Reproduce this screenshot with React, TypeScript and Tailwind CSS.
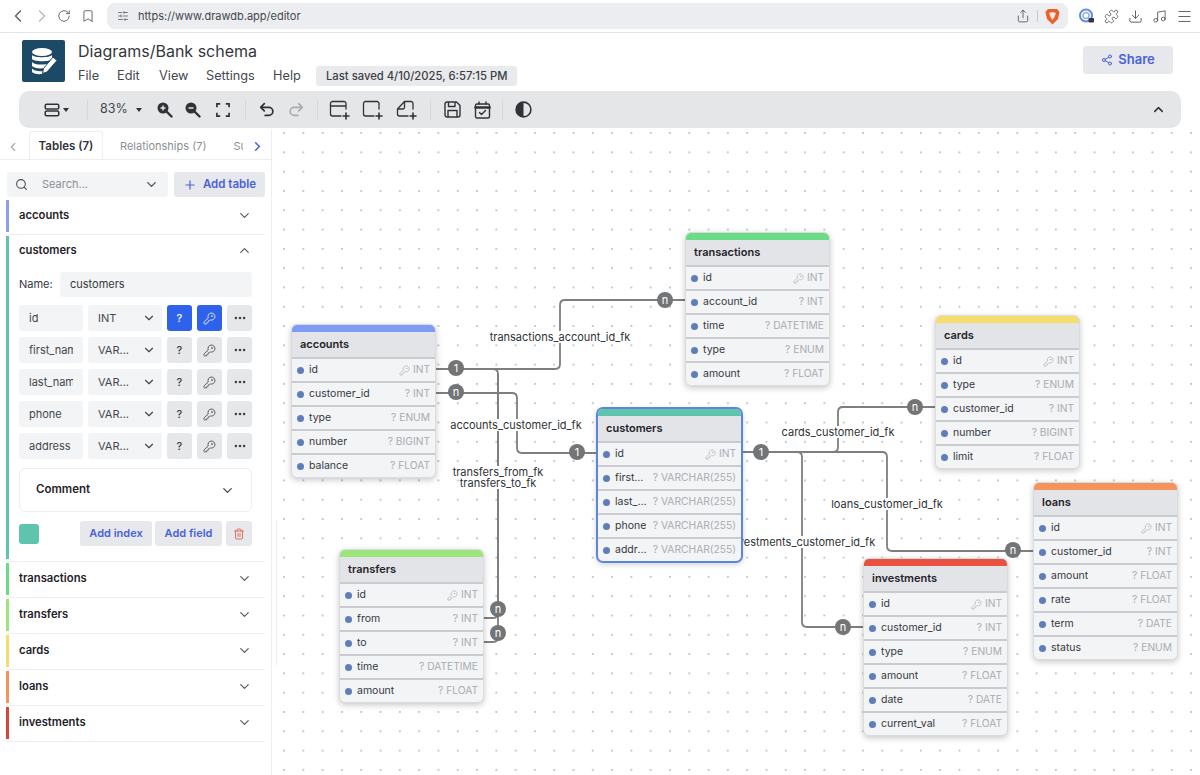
import { Bookmark, ChevronDown, ChevronLeft, ChevronRight, ChevronUp, Download, KeyRound, Menu, MoreHorizontal, Music, Plus, Puzzle, RotateCw, Search, Share, Share2, SlidersHorizontal, Trash2 } from 'lucide-react';

type Row = { name: string; type: string; pk?: boolean };
type TableData = { name: string; color: string; left: number; top: number; selected?: boolean; rows: Row[] };

// page coords minus the canvas origin (272, 130)
const tables: TableData[] = [
  { name: 'accounts', color: '#7f9cf5', left: 19, top: 194, rows: [
    { name: 'id', type: 'INT', pk: true }, { name: 'customer_id', type: '? INT' }, { name: 'type', type: '? ENUM' }, { name: 'number', type: '? BIGINT' }, { name: 'balance', type: '? FLOAT' },
  ] },
  { name: 'customers', color: '#5ec4ae', left: 325, top: 278, selected: true, rows: [
    { name: 'id', type: 'INT', pk: true }, { name: 'first_name', type: '? VARCHAR(255)' }, { name: 'last_name', type: '? VARCHAR(255)' }, { name: 'phone', type: '? VARCHAR(255)' }, { name: 'address', type: '? VARCHAR(255)' },
  ] },
  { name: 'transactions', color: '#6bdc85', left: 413, top: 102, rows: [
    { name: 'id', type: 'INT', pk: true }, { name: 'account_id', type: '? INT' }, { name: 'time', type: '? DATETIME' }, { name: 'type', type: '? ENUM' }, { name: 'amount', type: '? FLOAT' },
  ] },
  { name: 'cards', color: '#f5dc6c', left: 663, top: 185, rows: [
    { name: 'id', type: 'INT', pk: true }, { name: 'type', type: '? ENUM' }, { name: 'customer_id', type: '? INT' }, { name: 'number', type: '? BIGINT' }, { name: 'limit', type: '? FLOAT' },
  ] },
  { name: 'transfers', color: '#9be57a', left: 67, top: 419, rows: [
    { name: 'id', type: 'INT', pk: true }, { name: 'from', type: '? INT' }, { name: 'to', type: '? INT' }, { name: 'time', type: '? DATETIME' }, { name: 'amount', type: '? FLOAT' },
  ] },
  { name: 'investments', color: '#e8503f', left: 591, top: 428, rows: [
    { name: 'id', type: 'INT', pk: true }, { name: 'customer_id', type: '? INT' }, { name: 'type', type: '? ENUM' }, { name: 'amount', type: '? FLOAT' }, { name: 'date', type: '? DATE' }, { name: 'current_val', type: '? FLOAT' },
  ] },
  { name: 'loans', color: '#f4935a', left: 761, top: 352, rows: [
    { name: 'id', type: 'INT', pk: true }, { name: 'customer_id', type: '? INT' }, { name: 'amount', type: '? FLOAT' }, { name: 'rate', type: '? FLOAT' }, { name: 'term', type: '? DATE' }, { name: 'status', type: '? ENUM' },
  ] },
];

const lines = [
  'M164 239 H283 q5 0 5 -5 V175 q0 -5 5 -5 H413',
  'M164 263 H240 q5 0 5 5 V318 q0 5 5 5 H325',
  'M212 488 H221 q5 0 5 -5 V244 q0 -5 -5 -5 H164',
  'M212 512 H221 q5 0 5 -5 V244',
  'M470 322 H561 q5 0 5 -5 V282 q0 -5 5 -5 H663',
  'M470 322 H610 q5 0 5 5 V416 q0 5 5 5 H761',
  'M470 322 H525 q5 0 5 5 V492 q0 5 5 5 H591',
];

const badges = [
  { x: 184, y: 238, t: '1' }, { x: 184, y: 262, t: 'n' }, { x: 393, y: 170, t: 'n' }, { x: 305, y: 322, t: '1' },
  { x: 489, y: 322, t: '1' }, { x: 643, y: 277, t: 'n' }, { x: 741, y: 420, t: 'n' }, { x: 571, y: 497, t: 'n' },
  { x: 226, y: 479, t: 'n' }, { x: 226, y: 503, t: 'n' },
];

const labels = [
  { x: 288, y: 207, t: 'transactions_account_id_fk' },
  { x: 244, y: 295, t: 'accounts_customer_id_fk' },
  { x: 226, y: 342, t: 'transfers_from_fk' },
  { x: 226, y: 353, t: 'transfers_to_fk' },
  { x: 566, y: 302, t: 'cards_customer_id_fk' },
  { x: 615, y: 374, t: 'loans_customer_id_fk' },
  { x: 530, y: 412, t: 'investments_customer_id_fk' },
];

const fields = [
  { name: 'id', type: 'INT', on: true },
  { name: 'first_name', type: 'VAR...' },
  { name: 'last_name', type: 'VAR...' },
  { name: 'phone', type: 'VAR...' },
  { name: 'address', type: 'VAR...' },
];

function DbTable({ t }: { t: TableData }) {
  return (
    <div
      className={`absolute w-[145px] rounded-md bg-[#f3f4f6] shadow-[0_2px_6px_rgba(0,0,0,0.22)] overflow-hidden border ${t.selected ? 'border-[#5b86dc] ring-1 ring-[#5b86dc]' : 'border-[#d9dbdf]'}`}
      style={{ left: t.left, top: t.top }}
    >
      <div className="h-[7px]" style={{ background: t.color }} />
      <div className="h-[27px] bg-[#e3e4e7] border-b-2 border-[#c9cbcf] flex items-center pl-[8px] text-[11px] font-semibold text-[#1f2329]">{t.name}</div>
      {t.rows.map((r, i) => (
        <div key={r.name} className={`flex items-center pl-[5px] pr-[5px] text-[10.5px] ${i < t.rows.length - 1 ? 'h-[24px] border-b-2 border-[#c9cbcf]' : 'h-[22px]'}`}>
          <span className="w-[7px] h-[7px] rounded-full bg-[#5f7db9] shrink-0" />
          <span className="ml-[5px] text-[#33383f] truncate min-w-0">{r.name}</span>
          <span className="ml-auto pl-[5px] flex items-center gap-[3px] text-[10.25px] text-[#a9acb1] whitespace-nowrap shrink-0">
            {r.pk && <KeyRound size={11} strokeWidth={1.4} />}
            {r.type}
          </span>
        </div>
      ))}
    </div>
  );
}

function Collapsed({ name, color }: { name: string; color: string }) {
  return (
    <div className="border-b border-[#eceef0] pb-[2px] mb-[1px]">
      <div className="h-[32px] pb-[2px] border-l-[3px] pl-[10px] pr-[13px] flex items-center justify-between" style={{ borderColor: color }}>
        <span className="text-[11.25px] font-semibold text-[#1f2329]">{name}</span>
        <ChevronDown size={15} className="text-[#5b6067]" />
      </div>
    </div>
  );
}

function Divider() {
  return <div className="w-px h-[20px] bg-[#d6d8db]" />;
}

function BarIcon({ children, w = 18 }: { children: React.ReactNode; w?: number }) {
  return (
    <svg width={w} height={w} viewBox="0 0 20 20" fill="none" stroke="#2f3338" strokeWidth="1.7" strokeLinecap="round" strokeLinejoin="round">
      {children}
    </svg>
  );
}

export default function App() {
  return (
    <div className="h-[775px] w-[1200px] overflow-hidden bg-white flex flex-col font-['Inter','Liberation_Sans',sans-serif]">
      {/* browser chrome */}
      <div className="h-[33px] shrink-0 border-b border-[#e3e4e6] flex items-center pl-[8px] text-[#55585d]">
        <ChevronLeft size={20} strokeWidth={1.5} />
        <ChevronRight size={20} strokeWidth={1.5} className="ml-[4px] text-[#b5b7ba]" />
        <RotateCw size={14} strokeWidth={1.5} className="ml-[5px]" />
        <Bookmark size={14} strokeWidth={1.5} className="ml-[10px]" />
        <div className="ml-[12px] w-[961px] h-[26px] rounded-[8px] bg-[#ecedf0] flex items-center pl-[10px] pr-[8px]">
          <SlidersHorizontal size={12} strokeWidth={1.5} />
          <span className="ml-[9px] text-[11px] text-[#44474c]">https://www.drawdb.app/editor</span>
          <Share size={14} strokeWidth={1.5} className="ml-auto" />
          <div className="w-px h-[12px] bg-[#c8cacd] mx-[7px]" />
          <svg width="15" height="17" viewBox="0 0 15 17">
            <path d="M3 1 H12 L14.5 4 L13 11 L7.5 16.5 L2 11 L0.5 4 Z" fill="#e8602c" />
            <path d="M4 5 L7.5 4 L11 5 L9.5 9 L7.5 12 L5.5 9 Z" fill="#fff" opacity="0.85" />
          </svg>
        </div>
        <svg className="ml-[11px]" width="16" height="16" viewBox="0 0 16 16" fill="none">
          <circle cx="7" cy="7.5" r="6" stroke="#5f8fd6" strokeWidth="2" />
          <circle cx="7" cy="7.5" r="3" stroke="#8fb0e0" strokeWidth="1.5" />
          <rect x="9.5" y="10" width="5.5" height="4.5" rx="1" fill="#33363a" />
        </svg>
        <Puzzle size={15} strokeWidth={1.4} className="ml-[9px]" />
        <Download size={15} strokeWidth={1.5} className="ml-[9px]" />
        <Music size={15} strokeWidth={1.4} className="ml-[9px]" />
        <Menu size={17} strokeWidth={1.3} className="ml-[9px]" />
      </div>

      {/* header */}
      <div className="h-[58px] shrink-0 flex items-start pl-[22px] pr-[27px]">
        <div className="mt-[7px] w-[43px] h-[42px] rounded-[2px] bg-[#1c4a66] flex items-center justify-center">
          <svg width="30" height="30" viewBox="0 0 30 30" fill="#fff">
            <ellipse cx="13" cy="6" rx="10" ry="4" />
            <path d="M3 9 C5 12 21 12 23 9 V13 C21 16 5 16 3 13 Z" />
            <path d="M3 16 C5 19 16 19.5 20 17 L16 22 C10 23 5 22 3 20 Z" />
            <path d="M3 22.5 C5 25 10 25.5 14 25 L13 28 C8 28.5 4 27.5 3 26 Z" />
            <path d="M24 11 L28 14.5 L18 26 L13.5 27.5 L14.5 22.5 Z" stroke="#1c4a66" strokeWidth="1" />
          </svg>
        </div>
        <div className="ml-[13px] mt-[6px]">
          <div className="text-[16px] leading-[24px] text-[#33373c]">Diagrams/Bank schema</div>
          <div className="mt-[3px] flex items-center text-[12.75px] text-[#44484e]">
            <span className="w-[39px]">File</span>
            <span className="w-[42px]">Edit</span>
            <span className="w-[47px]">View</span>
            <span className="w-[67px]">Settings</span>
            <span className="w-[43px]">Help</span>
            <span className="h-[20px] px-[10px] rounded-[3px] bg-[#e9eaec] flex items-center text-[11.25px] font-medium text-[#3c4046] whitespace-nowrap">Last saved 4/10/2025, 6:57:15 PM</span>
          </div>
        </div>
        <button className="ml-auto mt-[13px] w-[90px] h-[28px] rounded-[4px] bg-[#e6e8ec] flex items-center justify-center gap-[5px] text-[13px] font-semibold text-[#4a62d8]">
          <Share2 size={12} strokeWidth={2} />
          Share
        </button>
      </div>

      {/* toolbar */}
      <div className="mx-[19px] h-[37px] shrink-0 rounded-[10px] bg-[#e5e6e8] flex items-center text-[#2f3338]">
        <div className="ml-[24px] flex items-center gap-[2px] w-[44px]">
          <BarIcon>
            <rect x="2.5" y="3.5" width="15" height="5.5" rx="1.5" />
            <rect x="2.5" y="11" width="15" height="5.5" rx="1.5" />
          </BarIcon>
          <span className="w-0 h-0 border-x-[3.5px] border-x-transparent border-t-[4px] border-t-[#2f3338]" />
        </div>
        <Divider />
        <span className="ml-[12px] text-[12.5px] text-[#44484e]">83%</span>
        <span className="ml-[8px] w-0 h-0 border-x-[3.5px] border-x-transparent border-t-[4px] border-t-[#2f3338]" />
        <svg className="ml-[14px]" width="17" height="17" viewBox="0 0 17 17" fill="none">
          <circle cx="7" cy="7" r="5.5" fill="#2f3338" />
          <path d="M11 11 L15.5 15.5" stroke="#2f3338" strokeWidth="2.4" strokeLinecap="round" />
          <path d="M7 4.5 V9.5 M4.5 7 H9.5" stroke="#e5e6e8" strokeWidth="1.5" />
        </svg>
        <svg className="ml-[11px]" width="17" height="17" viewBox="0 0 17 17" fill="none">
          <circle cx="7" cy="7" r="5.5" fill="#2f3338" />
          <path d="M11 11 L15.5 15.5" stroke="#2f3338" strokeWidth="2.4" strokeLinecap="round" />
          <path d="M4.5 7 H9.5" stroke="#e5e6e8" strokeWidth="1.5" />
        </svg>
        <svg className="ml-[15px] mr-[15px]" width="14" height="14" viewBox="0 0 15 15" fill="none" stroke="#2f3338" strokeWidth="1.8">
          <path d="M1 4.5 V1 H4.5 M10.5 1 H14 V4.5 M14 10.5 V14 H10.5 M4.5 14 H1 V10.5" />
        </svg>
        <Divider />
        <span className="ml-[12px]">
          <BarIcon>
            <path d="M7 3 L3 7 L7 11 M3 7 H12 a4.5 4.5 0 0 1 0 9 H8" strokeWidth="1.9" />
          </BarIcon>
        </span>
        <span className="ml-[11px] mr-[12px]">
          <BarIcon>
            <path d="M13 3 L17 7 L13 11 M17 7 H8 a4.5 4.5 0 0 0 0 9 H12" stroke="#a9abae" strokeWidth="1.9" />
          </BarIcon>
        </span>
        <Divider />
        <svg className="ml-[11px]" width="22" height="20" viewBox="0 0 22 20" fill="none" stroke="#2f3338" strokeWidth="1.3" strokeLinecap="round">
          <path d="M17 9 V3.5 A2 2 0 0 0 15 1.5 H3.5 A2 2 0 0 0 1.5 3.5 V14 A2 2 0 0 0 3.5 16 H12 M1.5 6 H17" />
          <path d="M17 13 V19 M14 16 H20" strokeWidth="1.6" />
        </svg>
        <svg className="ml-[11px]" width="22" height="20" viewBox="0 0 22 20" fill="none" stroke="#2f3338" strokeWidth="1.3" strokeLinecap="round">
          <path d="M17 9 V3.5 A2 2 0 0 0 15 1.5 H3.5 A2 2 0 0 0 1.5 3.5 V14 A2 2 0 0 0 3.5 16 H12" />
          <path d="M17 13 V19 M14 16 H20" strokeWidth="1.6" />
        </svg>
        <svg className="ml-[12px]" width="22" height="20" viewBox="0 0 22 20" fill="none" stroke="#2f3338" strokeWidth="1.3" strokeLinecap="round" strokeLinejoin="round">
          <path d="M17 9 V3.5 A2 2 0 0 0 15 1.5 H8.5 L1.5 9 V14 A2 2 0 0 0 3.5 16 H12 M1.5 9 H7 A1.5 1.5 0 0 0 8.5 7.5 V1.5" />
          <path d="M17 13 V19 M14 16 H20" strokeWidth="1.6" />
        </svg>
        <span className="ml-[12px] mr-[13px]"><Divider /></span>
        <svg width="17" height="17" viewBox="0 0 17 17" fill="none" stroke="#2f3338" strokeWidth="1.4" strokeLinejoin="round">
          <path d="M1 3 A2 2 0 0 1 3 1 H12.5 L16 4.5 V14 A2 2 0 0 1 14 16 H3 A2 2 0 0 1 1 14 Z" />
          <path d="M4.5 1 V5.5 H11 V1 M4 16 V9.5 H13 V16" />
        </svg>
        <svg className="ml-[13px]" width="17" height="18" viewBox="0 0 17 18" fill="none" stroke="#2f3338" strokeWidth="1.4" strokeLinecap="round" strokeLinejoin="round">
          <rect x="1.5" y="3" width="14" height="14" rx="1.5" />
          <path d="M1.5 6.5 H15.5" strokeWidth="2.6" />
          <path d="M5 1 V3 M12 1 V3" />
          <path d="M5.5 11.5 L7.5 13.5 L11.5 9.5" />
        </svg>
        <span className="ml-[11px] mr-[12px]"><Divider /></span>
        <svg width="17" height="17" viewBox="0 0 17 17">
          <circle cx="8.5" cy="8.5" r="7.4" fill="none" stroke="#2f3338" strokeWidth="1.6" />
          <path d="M8.5 1 A7.5 7.5 0 0 0 8.5 16 Z" fill="#2f3338" />
        </svg>
        <ChevronUp size={15} strokeWidth={2.4} className="ml-auto mr-[15px]" />
      </div>

      {/* main */}
      <div className="flex-1 min-h-0 flex mt-[2px]">
        <aside className="w-[272px] shrink-0 border-r border-[#eceef0] pt-[2px] pl-[6px] pr-[6px]">
          {/* tabs */}
          <div className="h-[28px] -mr-[6px] -ml-[6px] border-b border-[#eceef0] flex items-end relative text-[11.5px]">
            <ChevronLeft size={14} className="absolute left-[6px] top-[8px] text-[#a9acb1]" />
            <div className="ml-[29px] w-[74px] h-[28px] pt-[2px] border border-b-0 border-[#eceef0] rounded-t-[3px] bg-white flex items-center justify-center font-semibold text-[#2f3338]">Tables (7)</div>
            <div className="ml-[17px] h-[28px] pt-[2px] flex items-center text-[11px] text-[#8b8f95] whitespace-nowrap">Relationships (7)</div>
            <div className="ml-[27px] w-[10px] h-[28px] pt-[2px] flex items-center text-[11px] text-[#8b8f95] overflow-hidden">Subject</div>
            <ChevronRight size={15} strokeWidth={2.4} className="absolute left-[250px] top-[7px] text-[#3f63dc]" />
          </div>
          {/* search */}
          <div className="mt-[12px] flex gap-[6px] mb-[3px] ml-[1px]">
            <div className="w-[161px] h-[25px] rounded-[3px] bg-[#f3f4f5] flex items-center pl-[8px] pr-[9px] text-[11px] text-[#8b8f95]">
              <Search size={13} strokeWidth={2} className="text-[#4a4e54]" />
              <span className="ml-[14px]">Search...</span>
              <ChevronDown size={15} className="ml-auto text-[#4a4e54]" />
            </div>
            <button className="w-[91px] h-[25px] rounded-[3px] bg-[#e6e8ec] flex items-center justify-center gap-[6px] text-[11.5px] font-semibold text-[#4a62d8]">
              <Plus size={14} strokeWidth={2} />
              Add table
            </button>
          </div>
          <Collapsed name="accounts" color="#8b9ef0" />
          {/* open table */}
          <div className="border-b border-[#eceef0] pb-[2px] mb-[1px]">
            <div className="border-l-[3px] border-[#5ec4ae] pl-[10px] pr-[13px] h-[323px]">
              <div className="h-[29px] flex items-center justify-between">
                <span className="text-[11.25px] font-semibold text-[#1f2329]">customers</span>
                <ChevronUp size={15} className="text-[#5b6067]" />
              </div>
              <div className="mt-[7px] flex items-center text-[11px] text-[#33383f]">
                <span className="w-[41px]">Name:</span>
                <div className="w-[192px] h-[25px] rounded-[3px] bg-[#f3f4f5] flex items-center pl-[10px]">customers</div>
              </div>
              <div className="mt-[8px] flex flex-col gap-[6px]">
                {fields.map((f) => (
                  <div key={f.name} className="flex h-[26px] text-[11px] text-[#44484e]">
                    <div className="w-[64px] rounded-[3px] bg-[#f3f4f5] flex items-center pl-[10px]">
                      <span className="w-[44px] overflow-hidden whitespace-nowrap">{f.name}</span>
                    </div>
                    <div className="ml-[5px] w-[74px] rounded-[3px] bg-[#f3f4f5] flex items-center pl-[10px] pr-[6px]">
                      {f.type}
                      <ChevronDown size={14} className="ml-auto" />
                    </div>
                    <div className={`ml-[5px] w-[25px] rounded-[3px] flex items-center justify-center font-medium ${f.on ? 'bg-[#2f62ea] text-white' : 'bg-[#e6e7e9] text-[#3c4046]'}`}>?</div>
                    <div className={`ml-[5px] w-[25px] rounded-[3px] flex items-center justify-center ${f.on ? 'bg-[#2f62ea] text-white' : 'bg-[#e6e7e9] text-[#3c4046]'}`}>
                      <KeyRound size={13} strokeWidth={1.5} />
                    </div>
                    <div className="ml-[5px] w-[25px] rounded-[3px] bg-[#e6e7e9] flex items-center justify-center text-[#3c4046]">
                      <MoreHorizontal size={14} strokeWidth={2.4} />
                    </div>
                  </div>
                ))}
              </div>
              <div className="mt-[9px] w-[233px] h-[44px] rounded-[6px] border border-[#eceef0] flex items-center justify-between pl-[16px] pr-[16px] text-[11.5px] font-semibold text-[#1f2329]">
                Comment
                <ChevronDown size={15} className="text-[#44484e]" />
              </div>
              <div className="mt-[9px] flex items-center w-[233px] text-[11px] font-semibold text-[#4a62d8]">
                <div className="w-[20px] h-[20px] rounded-[3px] bg-[#5ec4ae]" />
                <button className="ml-auto w-[72px] h-[25px] rounded-[3px] bg-[#e6e8ec]">Add index</button>
                <button className="ml-[3px] w-[67px] h-[25px] rounded-[3px] bg-[#e6e8ec]">Add field</button>
                <button className="ml-[4px] w-[26px] h-[25px] rounded-[3px] bg-[#e6e8ec] flex items-center justify-center text-[#e5604f]">
                  <Trash2 size={12} strokeWidth={1.8} />
                </button>
              </div>
            </div>
          </div>
          <Collapsed name="transactions" color="#6bdc85" />
          <Collapsed name="transfers" color="#9be57a" />
          <Collapsed name="cards" color="#f5dc6c" />
          <Collapsed name="loans" color="#f4935a" />
          <Collapsed name="investments" color="#d9453a" />
        </aside>

        {/* canvas */}
        <div className="relative flex-1 min-w-0 overflow-hidden bg-white bg-[radial-gradient(circle,#b0b3b8_0.6px,transparent_0.9px)] bg-[size:19.3px_19.3px] bg-[position:2.4px_-6.6px]">
          <div className="absolute left-[4px] top-[390px] w-px h-[145px] bg-[#eceef0]" />
          <svg className="absolute left-0 top-0" width="928" height="642" fill="none">
            {lines.map((d) => (
              <path key={d} d={d} stroke="#7d7e80" strokeWidth="1.8" />
            ))}
          </svg>
          {labels.map((l) => (
            <div
              key={l.t}
              className="absolute -translate-x-1/2 -translate-y-1/2 bg-white px-[1px] text-[11px] leading-[12px] text-[#2f3338] whitespace-nowrap"
              style={{ left: l.x, top: l.y }}
            >
              {l.t}
            </div>
          ))}
          {tables.map((t) => (
            <DbTable key={t.name} t={t} />
          ))}
          {badges.map((b) => (
            <div
              key={`${b.x}-${b.y}`}
              className="absolute -translate-x-1/2 -translate-y-1/2 w-[16px] h-[16px] rounded-full bg-[#737476] flex items-center justify-center text-[11px] text-white"
              style={{ left: b.x, top: b.y }}
            >
              {b.t}
            </div>
          ))}
        </div>
      </div>
    </div>
  );
}
